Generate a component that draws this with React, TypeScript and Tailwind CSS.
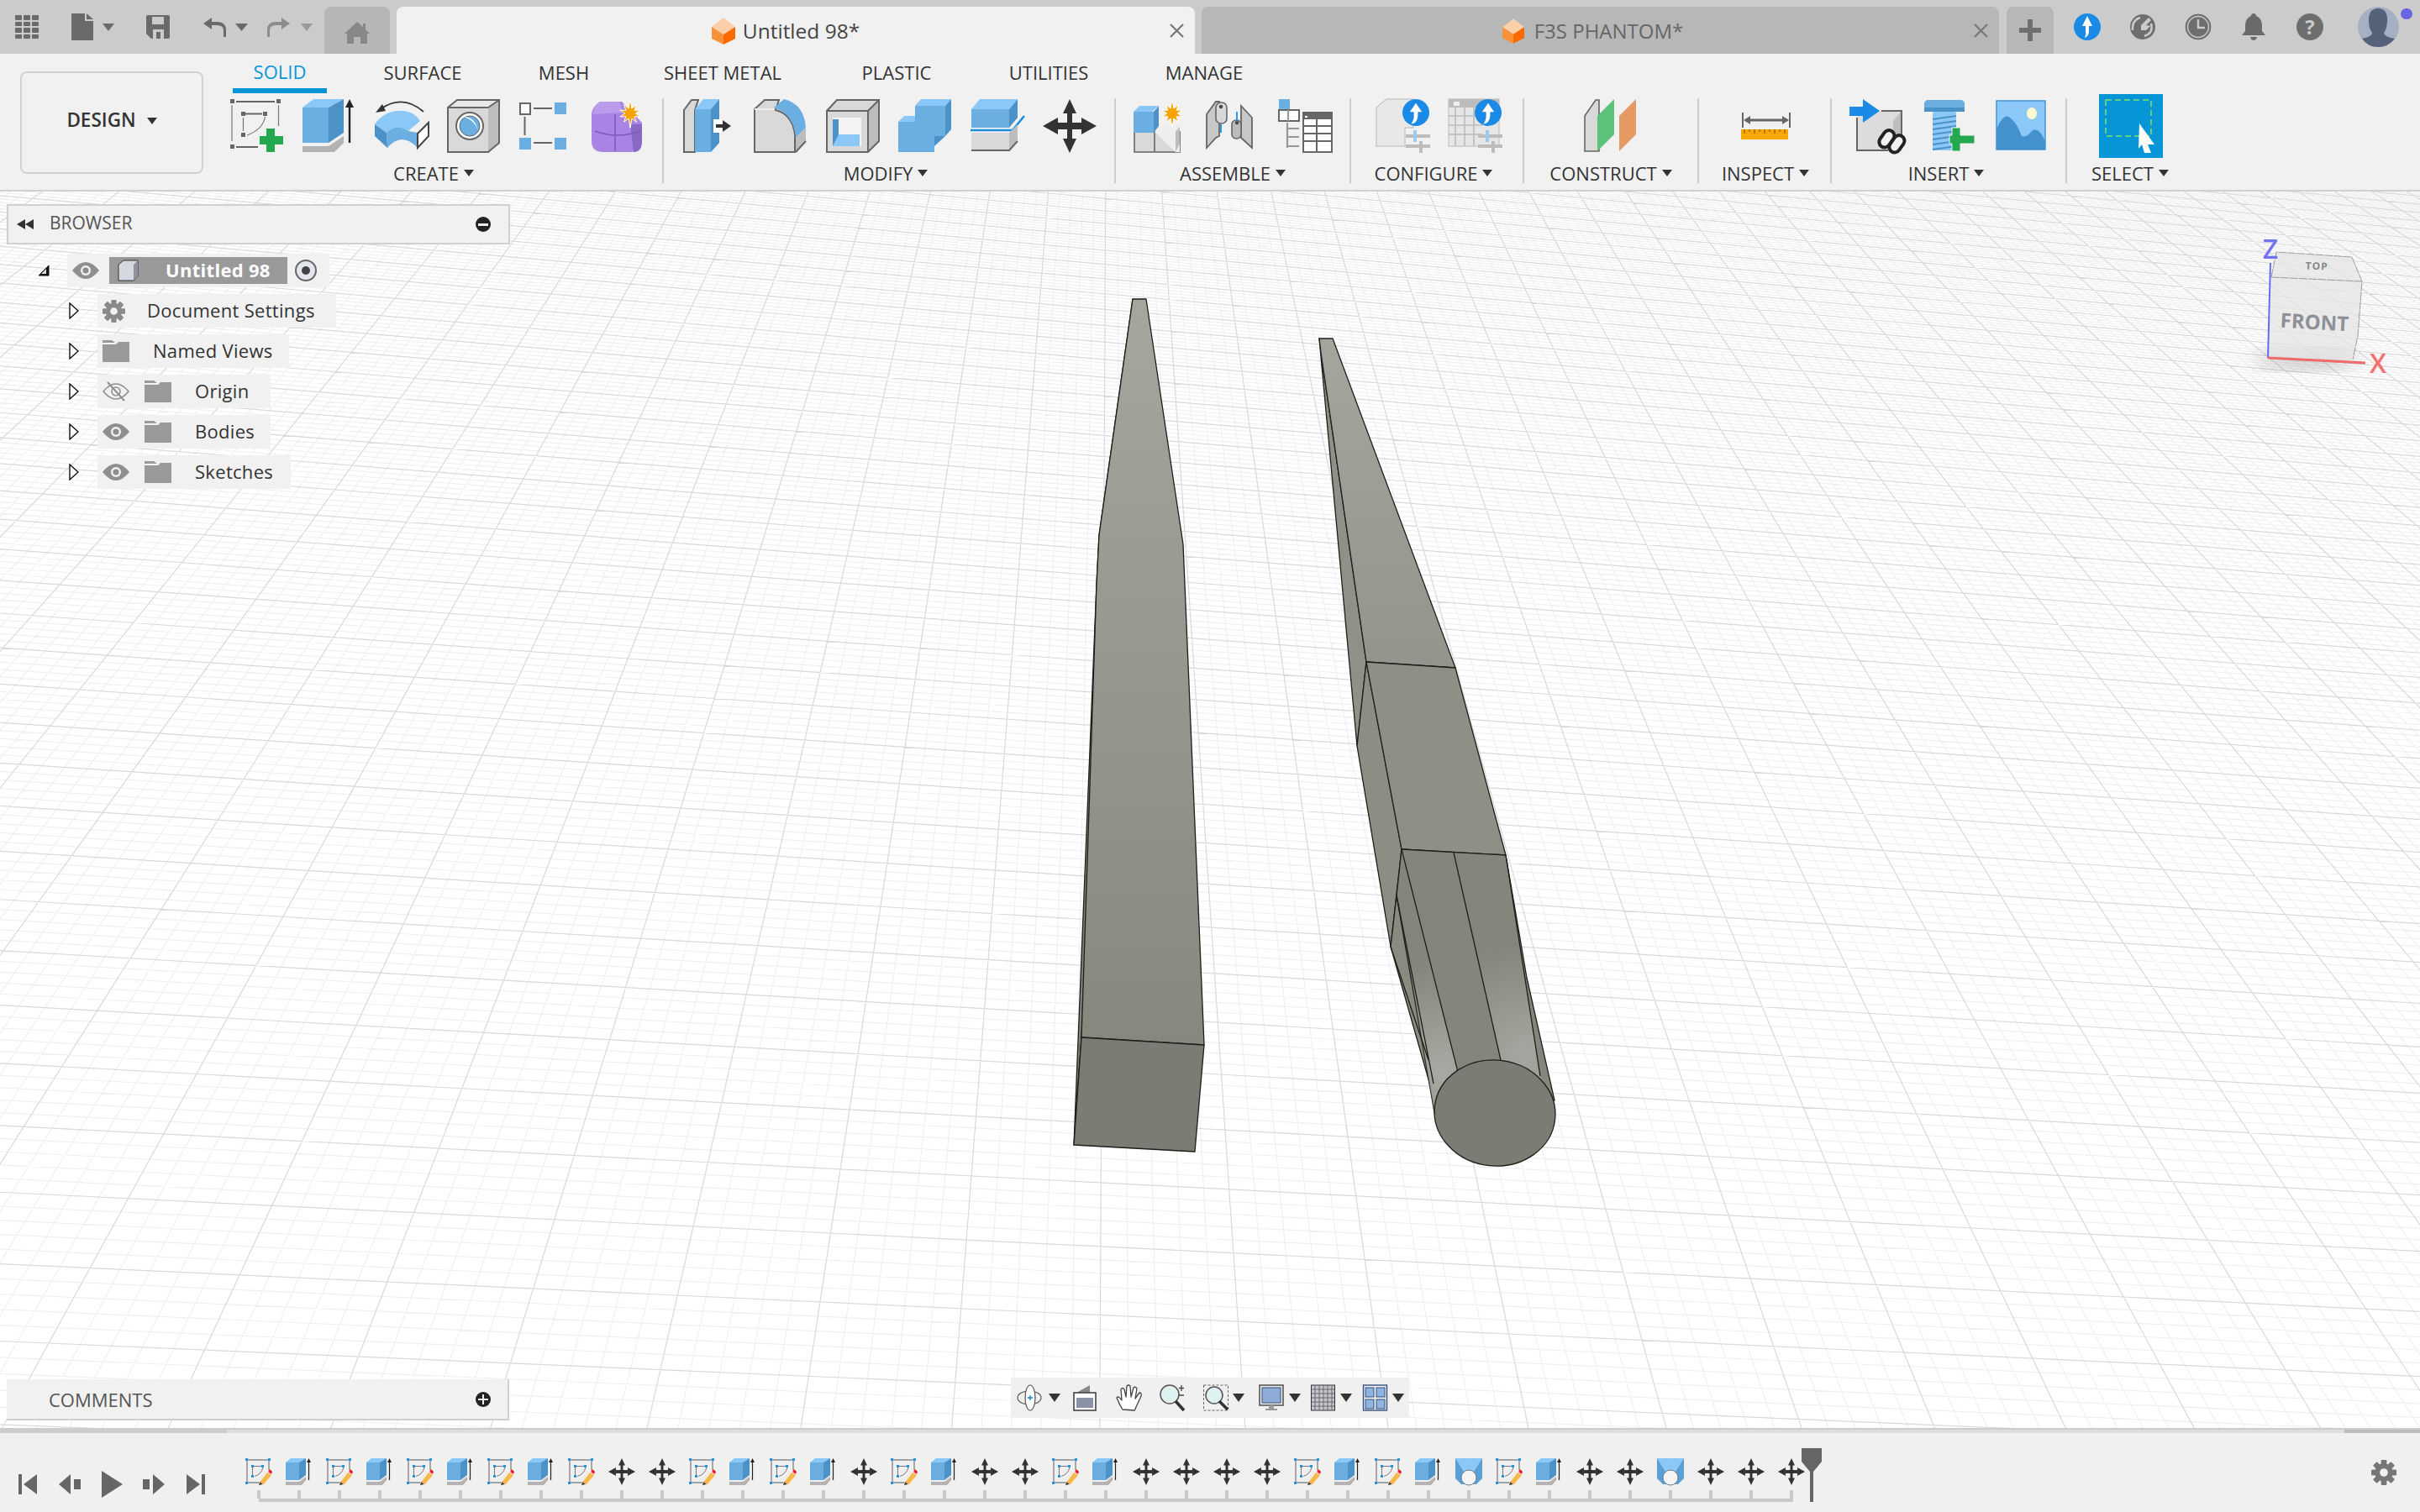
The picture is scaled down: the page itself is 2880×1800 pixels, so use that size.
import type { ReactNode } from "react";

const BLUE = "#6aaee2";
const BLUE_TOP = "#8bc8f8";
const BLUE_SIDE = "#4a92c8";
const GREY = "#d9d9d9";
const GREY_SIDE = "#bdbdbd";
const EDGE = "#666666";

// ground grid, a plain homography from (u, v) grid units to screen pixels
const V1 = [1320, -700];
const V2 = [30000, 2900];
const P0 = [480, 1100];
const A = 0.00483;
const B = 0.0314;

function project(u: number, v: number) {
  const w = 1 + u * A + v * B;
  const x = (P0[0] + u * A * V2[0] + v * B * V1[0]) / w;
  const y = (P0[1] + u * A * V2[1] + v * B * V1[1]) / w;
  return `${x.toFixed(1)} ${y.toFixed(1)}`;
}

function gridPath(major: boolean) {
  let d = "";
  for (let i = -150; i <= 225; i++) {
    if ((i % 5 === 0) !== major) continue;
    d += `M${project(i / 5, -14)}L${project(i / 5, 50)}`;
  }
  for (let i = -70; i <= 250; i++) {
    if ((i % 5 === 0) !== major) continue;
    d += `M${project(-30, i / 5)}L${project(45, i / 5)}`;
  }
  return d;
}

function Icon({ children, className = "w-[64px] h-[64px]", vb = "0 0 64 64" }: { children: ReactNode; className?: string; vb?: string }) {
  return (
    <svg viewBox={vb} className={`${className} shrink-0 block overflow-visible`}>
      {children}
    </svg>
  );
}

function Caret({ className = "w-[12px] h-[8px]", color = "#333333" }: { className?: string; color?: string }) {
  return (
    <svg viewBox="0 0 12 8" preserveAspectRatio="none" className={`${className} shrink-0 block`}>
      <path d="M0 0H12L6 8Z" fill={color} />
    </svg>
  );
}

function Star({ cx, cy, r }: { cx: number; cy: number; r: number }) {
  const pts: string[] = [];
  for (let i = 0; i < 20; i++) {
    const a = (i / 20) * Math.PI * 2;
    const rr = i % 2 === 0 ? (i % 10 === 0 ? r * 1.15 : r * 0.85) : r * 0.42;
    pts.push(`${(cx + Math.sin(a) * rr).toFixed(1)},${(cy - Math.cos(a) * rr).toFixed(1)}`);
  }
  return <polygon points={pts.join(" ")} fill="#f8a400" stroke="#fff" strokeWidth="1" />;
}

function MoveGlyph() {
  return (
    <path
      d="M32 0L40 17H35V28H46V22L64 32L46 42V36H35V47H40L32 64L24 47H29V36H18V42L0 32L18 22V28H29V17H24Z"
      fill="#333333"
    />
  );
}

const CreateSketch = () => (
  <Icon>
    <g fill={EDGE}>
      <rect x="0" y="0" width="5" height="5" />
      <rect x="55" y="0" width="5" height="5" />
      <rect x="0" y="54" width="5" height="5" />
      <rect x="13" y="15" width="5" height="5" />
      <rect x="39" y="15" width="5" height="5" />
      <rect x="13" y="40" width="5" height="5" />
    </g>
    <path d="M7 3H53M7 57H33M18 17.5H38" stroke={EDGE} strokeWidth="2" fill="none" />
    <path d="M2 7V50M57.5 7V32M15.5 22V38M41.5 21Q39 36 20 43" stroke="#777" strokeWidth="1.2" fill="none" />
    <path d="M43 35H53V44H63V54H53V63H43V54H35V44H43Z" fill="#22a84e" />
  </Icon>
);

const Extrude = () => (
  <Icon>
    <path d="M0 10L13 0H49L31 10Z" fill={BLUE_TOP} />
    <path d="M0 10H31V52H0Z" fill={BLUE} />
    <path d="M31 10L49 0V40L31 52Z" fill={BLUE_SIDE} />
    <path d="M0 56H31L49 44V52L38 63H0Z" fill="#b3b3b3" />
    <path d="M56 52V6" stroke="#222" strokeWidth="2.4" />
    <path d="M51 10L56 0L61 10Z" fill="#222" />
  </Icon>
);

const Revolve = () => (
  <Icon>
    <path d="M58 15Q34 -6 8 11" stroke="#333" strokeWidth="1.7" fill="none" />
    <path d="M1 16L13 14L9 6Z" fill="#333" />
    <path d="M0 30C12 10 44 8 54 26L40 38Q26 28 14 40Z" fill={BLUE_TOP} />
    <path d="M14 40Q26 28 40 38L51 40L51 58Q32 38 15 58Z" fill={BLUE} />
    <path d="M0 30L14 40L15 58L0 44Z" fill={BLUE_SIDE} />
    <path d="M51 41L64 28V44L51 58Z" fill="#fff" stroke="#444" strokeWidth="2" />
  </Icon>
);

const Hole = () => (
  <Icon>
    <path d="M1 10L12 1H62L49 10Z" fill="#e8e8e8" />
    <path d="M1 10H49V63H1Z" fill={GREY} />
    <path d="M49 10L62 1V52L49 63Z" fill={GREY_SIDE} />
    <path d="M1 63V10L12 1H62V52L49 63ZM49 10H1M49 10L62 1" fill="none" stroke={EDGE} strokeWidth="2" />
    <circle cx="27" cy="32" r="16" fill="#fff" stroke={EDGE} strokeWidth="2" />
    <circle cx="27" cy="32" r="12" fill={BLUE} stroke={EDGE} strokeWidth="1" />
    <path d="M20 21C30 21 35 28 37 38C34 28 28 24 20 21Z" fill="#fff" />
  </Icon>
);

const Pattern = () => (
  <Icon>
    <rect x="1" y="5" width="12" height="13" fill="#fff" stroke={EDGE} strokeWidth="2" />
    <rect x="42" y="4" width="14" height="14" fill={BLUE} />
    <rect x="0" y="46" width="14" height="14" fill={BLUE} />
    <rect x="42" y="46" width="14" height="14" fill={BLUE} />
    <path d="M17 11H39M17 52H39M6.500 21V43" stroke={EDGE} strokeWidth="2" />
  </Icon>
);

const Form = () => (
  <Icon>
    <path d="M10 3H36L60 28V50Q60 63 46 63H14Q0 63 0 50V18Q0 10 10 3Z" fill="#a884e4" />
    <path d="M10 3H34L36 16L2 18Q2 9 10 3Z" fill="#bb9cec" />
    <path d="M46 30H60V50Q60 63 50 63Z" fill="#8a68c6" />
    <path d="M4 38Q30 48 58 38M28 18V62" stroke="#7c5cb8" strokeWidth="1.5" fill="none" />
    <Star cx={46} cy={17} r={15} />
  </Icon>
);

const PressPull = () => (
  <Icon>
    <path d="M3 13L12 1H20L16 13V63H3Z" fill={GREY} stroke={EDGE} strokeWidth="2" />
    <path d="M16 12L26 0H45L35 12Z" fill={BLUE_TOP} />
    <path d="M16 12H35V63H16Z" fill={BLUE} />
    <path d="M35 12L45 0V52L35 63Z" fill={BLUE_SIDE} />
    <rect x="38" y="24" width="12" height="16" fill="#fff" />
    <path d="M41 30H49V25L59 32L49 39V34H41Z" fill="#333" />
  </Icon>
);

const Fillet = () => (
  <Icon>
    <path d="M1 12L13 1H30L26 13Q46 18 49 42V63H1Z" fill={GREY} stroke={EDGE} strokeWidth="2" />
    <path d="M1 12H24" stroke="#eee" strokeWidth="2" />
    <path d="M24 10L36 0Q60 6 62 34L50 46Q48 18 24 10Z" fill={BLUE} />
    <path d="M50 46L62 34V50L50 63Z" fill={GREY_SIDE} />
    <path d="M50 63L62 50" stroke={EDGE} strokeWidth="2" />
  </Icon>
);

const Shell = () => (
  <Icon>
    <path d="M1 14L13 1H63V50L50 63H1Z" fill={GREY} />
    <path d="M50 14L63 1V50L50 63Z" fill={GREY_SIDE} />
    <path d="M1 63V14L13 1H63V50L50 63ZM1 14H50V63M50 14L63 1" fill="none" stroke={EDGE} strokeWidth="2" />
    <rect x="8" y="22" width="34" height="34" fill="#f4f4f4" />
    <path d="M8 24H15V46L8 56Z" fill={BLUE_SIDE} />
    <path d="M15 42H40V56H8Z" fill={BLUE_TOP} />
  </Icon>
);

const Combine = () => (
  <Icon>
    <path d="M20 8L27 0H63L56 8Z" fill={BLUE_TOP} />
    <path d="M0 27L7 20H20V27Z" fill={BLUE_TOP} />
    <path d="M20 8H56V44H43V63H0V27H20Z" fill={BLUE} />
    <path d="M56 8L63 0V36L56 44ZM43 44L56 44L43 56Z" fill={BLUE_SIDE} />
    <path d="M43 44V63L38 63V44Z" fill={BLUE} />
  </Icon>
);

const OffsetPlane = () => (
  <Icon>
    <path d="M1 12L11 0H56L46 12Z" fill={BLUE_TOP} />
    <path d="M1 12H46V34H1Z" fill={BLUE} />
    <path d="M46 12L56 0V22L46 34Z" fill={BLUE_SIDE} />
    <path d="M0 37H50L64 20" stroke="#1a8fe0" strokeWidth="2.6" fill="none" />
    <path d="M1 40H46V60H1Z" fill={GREY} />
    <path d="M46 40L56 30V50L46 60Z" fill={GREY_SIDE} />
    <path d="M1 61H46L56 50" stroke={EDGE} strokeWidth="2" fill="none" />
  </Icon>
);

const NewComponent = () => (
  <Icon>
    <path d="M1 39H25V63H1ZM25 39H55V63H25Z" fill={GREY} stroke={EDGE} strokeWidth="1.6" />
    <path d="M25 39L36 32H55V52L55 63H50" fill="#eee" />
    <path d="M50 39L55 33V53L50 63Z" fill={GREY_SIDE} />
    <path d="M0 15L7 8H30L22 15Z" fill={BLUE_TOP} />
    <path d="M0 15H24V40H0Z" fill={BLUE} />
    <path d="M24 15L30 8V32L24 40Z" fill={BLUE_SIDE} />
    <Star cx={46} cy={17} r={15} />
  </Icon>
);

const Joint = () => (
  <Icon>
    <path d="M1 18L12 3H16V44L12 46L1 58Z" fill="#c8c8c8" stroke={EDGE} strokeWidth="1.8" />
    <path d="M42 8L55 22V58L42 46Z" fill="#c8c8c8" stroke={EDGE} strokeWidth="1.8" />
    <rect x="12" y="4" width="13" height="25" rx="6" fill="#d8d8d8" stroke={EDGE} strokeWidth="1.6" />
    <rect x="31" y="25" width="11" height="22" rx="5" fill="#bbb" stroke={EDGE} strokeWidth="1.6" />
    <circle cx="18" cy="9" r="2.200" fill="#444" />
    <circle cx="37" cy="28" r="2.200" fill="#444" />
    <path d="M37 15V27M18 30V40" stroke="#1a8fe0" strokeWidth="1.8" />
  </Icon>
);

const Bom = () => (
  <Icon>
    <rect x="1" y="0" width="13" height="12" fill={BLUE} />
    <rect x="1" y="13" width="24" height="13" fill="#fff" stroke={EDGE} strokeWidth="2" />
    <path d="M12 13V26M11 28V58M11 35H25M11 45H25M11 56H25" stroke="#999" strokeWidth="2.2" fill="none" />
    <rect x="30" y="16" width="34" height="47" fill="#fff" stroke={EDGE} strokeWidth="2" />
    <rect x="30" y="16" width="34" height="8" fill="#666" />
    <rect x="32" y="20" width="3" height="2" fill="#fff" />
    <path d="M30 32H64M30 41H64M30 50H64M46 24V63" stroke={EDGE} strokeWidth="2" />
  </Icon>
);

const UpBadge = ({ cx, cy, r = 16 }: { cx: number; cy: number; r?: number }) => (
  <g>
    <circle cx={cx} cy={cy} r={r} fill="#1a8ae6" />
    <path
      d={`M${cx} ${cy - r * 0.7}L${cx + r * 0.45} ${cy - r * 0.05}H${cx + r * 0.15}V${cy + r * 0.25}Q${cx + r * 0.1} ${cy + r * 0.8} ${cx - r * 0.35} ${cy + r * 0.85}Q${cx - r * 0.12} ${cy + r * 0.5} ${cx - r * 0.15} ${cy + r * 0.2}V${cy - r * 0.05}H${cx - r * 0.45}Z`}
      fill="#fff"
    />
  </g>
);

const Sliders = ({ x }: { x: number }) => (
  <g>
    <rect x={x} y="42" width="29" height="4" fill="#bcbcbc" />
    <rect x={x + 9} y="37" width="4" height="14" fill="#9ccbef" />
    <rect x={x} y="54" width="29" height="4" fill="#bcbcbc" />
    <rect x={x + 16} y="50" width="4" height="14" fill="#bcbcbc" />
  </g>
);

const ConfigureA = () => (
  <Icon>
    <path d="M0 10L12 0H44V34H34V56H0Z" fill="#e8e8e8" stroke="#c8c8c8" strokeWidth="1.4" />
    <Sliders x={35} />
    <UpBadge cx={47} cy={16} />
  </Icon>
);

const ConfigureB = () => (
  <Icon>
    <rect x="0" y="0" width="60" height="56" fill="#e6e6e6" stroke="#c8c8c8" strokeWidth="1.4" />
    <rect x="0" y="0" width="60" height="10" fill="#bcbcbc" />
    <rect x="6" y="3" width="7" height="5" fill="#eee" />
    <path d="M0 20H40M0 31H40M0 42H40M8 10V56M19 10V56M30 10V56" stroke="#bbb" strokeWidth="1.6" />
    <Sliders x={35} />
    <UpBadge cx={47} cy={16} />
  </Icon>
);

const Construct = () => (
  <Icon>
    <path d="M1 20L14 1H18V62H1Z" fill={GREY} stroke={EDGE} strokeWidth="1.6" />
    <path d="M16 20L36 0V42L16 62Z" fill="#5cc27a" />
    <path d="M42 20L62 0V42L42 62Z" fill="#e59a63" />
  </Icon>
);

const Measure = () => (
  <Icon>
    <path d="M6 16V34M62 16V34" stroke={EDGE} strokeWidth="2" />
    <path d="M9 25H59" stroke={EDGE} strokeWidth="3" />
    <path d="M7 25L15 20V30ZM61 25L53 20V30Z" fill={EDGE} />
    <rect x="4" y="36" width="56" height="12" fill="#f6a800" />
    <path d="M8 36V41M14 36V39M20 36V41M26 36V39M32 36V41M38 36V39M44 36V41M50 36V39M56 36V41" stroke="#775000" strokeWidth="1" />
  </Icon>
);

const Derive = () => (
  <Icon>
    <path d="M9 14H62V50L52 61H9Z" fill="#dcdcdc" />
    <path d="M52 26L62 14V50L52 61Z" fill={GREY_SIDE} />
    <path d="M9 22V61H46M38 14H62V50" stroke={EDGE} strokeWidth="2" fill="none" />
    <path d="M0 9H16V0L36 14L16 28V20H0Z" fill="#1a8ae6" />
    <g fill="#f1f1f1" stroke="#222" strokeWidth="4">
      <rect x="38" y="36" width="13" height="22" rx="6.500" transform="rotate(35 44 47)" />
      <rect x="50" y="42" width="13" height="22" rx="6.500" transform="rotate(35 56 53)" />
    </g>
  </Icon>
);

const Bolt = () => (
  <Icon>
    <g transform="translate(3 0)">
      <path d="M0 4L3 1H45L48 4V15H0Z" fill={BLUE} />
      <path d="M0 10H48V15H0Z" fill={BLUE_SIDE} />
      <rect x="10" y="15" width="28" height="46" rx="2" fill={BLUE_TOP} />
      <path d="M10 24L38 20M10 30L38 26M10 36L38 32M10 42L38 38M10 48L38 44M10 54L38 50M10 60L38 56" stroke={BLUE_SIDE} strokeWidth="2" />
      <path d="M33 34H43V43H60V53H43V62H33V53H30V43H33Z" fill="#22a84e" stroke="#f1f1f1" strokeWidth="1" />
    </g>
  </Icon>
);

const Picture = () => (
  <Icon>
    <g transform="translate(3 0)">
      <rect x="0" y="2" width="58" height="58" fill={BLUE_TOP} stroke="#4a9ad8" strokeWidth="1.6" />
      <ellipse cx="42" cy="17" rx="6" ry="7" fill="#fffbd0" />
      <path d="M0 60V36Q8 16 16 22Q24 28 30 44Q36 46 42 38Q50 32 58 50V60Z" fill="#4392ce" />
    </g>
  </Icon>
);

const SelectIcon = () => (
  <div className="w-[76px] h-[76px] -my-[6px] bg-[#0696d7]">
    <Icon className="w-[76px] h-[76px]" vb="0 0 76 76">
      <rect x="8" y="7" width="54" height="43" fill="none" stroke="#5fd17f" strokeWidth="2" strokeDasharray="7 4" />
      <path d="M48 35L66 60L58 60L62 70L54 70L51 60L47 65Z" fill="#fff" />
    </Icon>
  </div>
);

const Move = () => (
  <Icon>
    <MoveGlyph />
  </Icon>
);

const SketchEdit = () => (
  <Icon className="w-[32px] h-[32px]" vb="0 0 32 32">
    <path d="M2 2H28M2 2V28M28 2V14M2 29H16" stroke="#888" strokeWidth="1.4" fill="none" />
    <g fill="#2196e0">
      <rect x="0" y="0" width="3" height="3" />
      <rect x="27" y="0" width="3" height="3" />
      <rect x="0" y="28" width="3" height="3" />
      <rect x="7" y="8" width="3" height="3" />
      <rect x="19" y="8" width="3" height="3" />
      <rect x="7" y="20" width="3" height="3" />
    </g>
    <path d="M10 9.500H19M8.500 11V20M21 11Q19 19 11 21.500" stroke="#777" strokeWidth="1" fill="none" />
    <path d="M17 29L26 17L31 20L22 31Z" fill="#f8b84a" />
    <path d="M27 16L29 13L32 16L31 19Z" fill="#e8202a" />
    <path d="M16 32L17 28L21 31Z" fill="#444" />
  </Icon>
);

const MiniExtrude = () => (
  <Icon className="w-[32px] h-[32px]" vb="0 0 32 32">
    <path d="M0 5L6 0H24L16 5Z" fill={BLUE_TOP} />
    <path d="M0 5H16V26H0Z" fill={BLUE} />
    <path d="M16 5L24 0V20L16 26Z" fill={BLUE_SIDE} />
    <path d="M0 28H16L24 22V26L19 32H0Z" fill="#b3b3b3" />
    <path d="M27.500 26V3" stroke="#222" strokeWidth="1.2" />
    <path d="M25 5L27.500 0L30 5Z" fill="#222" />
  </Icon>
);

const MiniMove = () => (
  <Icon className="w-[32px] h-[32px]" vb="0 0 64 64">
    <MoveGlyph />
  </Icon>
);

const MiniLoft = () => (
  <Icon className="w-[32px] h-[32px]" vb="0 0 32 32">
    <path d="M0 0H32V24L25 31H7L0 24Z" fill="#5a9fd6" />
    <path d="M0 0H32L22 16H10Z" fill={BLUE_TOP} />
    <ellipse cx="16" cy="23" rx="9" ry="9" fill="#f4f4f4" stroke="#777" strokeWidth="1" />
  </Icon>
);

const groups: { label: string; className: string; labelClass?: string; iconClass?: string; icons: ReactNode[] }[] = [
  { label: "CREATE", className: "w-[536px]", labelClass: "pr-[10px]", icons: [<CreateSketch />, <Extrude />, <Revolve />, <Hole />, <Pattern />, <Form />] },
  { label: "MODIFY", className: "w-[538px]", labelClass: "pr-[8px]", icons: [<PressPull />, <Fillet />, <Shell />, <Combine />, <OffsetPlane />, <Move />] },
  { label: "ASSEMBLE", className: "w-[280px]", icons: [<NewComponent />, <Joint />, <Bom />] },
  { label: "CONFIGURE", className: "w-[206px]", labelClass: "pr-[8px]", iconClass: "pl-[6px]", icons: [<ConfigureA />, <ConfigureB />] },
  { label: "CONSTRUCT", className: "w-[208px]", icons: [<Construct />] },
  { label: "INSPECT", className: "w-[158px]", labelClass: "pl-[2px]", icons: [<Measure />] },
  { label: "INSERT", className: "w-[280px]", labelClass: "pr-[6px]", icons: [<Derive />, <Bolt />, <Picture />] },
  { label: "SELECT", className: "w-[152px]", labelClass: "pr-[2px]", icons: [<SelectIcon />] },
];

const tabs = [
  { label: "SURFACE", className: "w-[228px]" },
  { label: "MESH", className: "w-[108px]" },
  { label: "SHEET METAL", className: "w-[270px]" },
  { label: "PLASTIC", className: "w-[144px]" },
  { label: "UTILITIES", className: "w-[218px]" },
  { label: "MANAGE", className: "w-[152px]" },
];

const history = "s e s e s e s e s m m s e s e m s e m m s e m m m m s e s e l s e m m l m m m".split(" ");

const OrangeCube = ({ className }: { className: string }) => (
  <Icon className={className} vb="0 0 28 32">
    <path d="M14 0L28 11L14 20L0 11Z" fill="#fbcfa8" />
    <path d="M0 11L14 20V32L0 25Z" fill="#f8923a" />
    <path d="M28 11L14 20V32L28 25Z" fill="#fb6a00" />
  </Icon>
);

const CloseX = () => (
  <svg viewBox="0 0 17 17" className="absolute right-[13px] top-[20px] w-[17px] h-[17px]">
    <path d="M1 1L16 16M16 1L1 16" stroke="#777" strokeWidth="2.2" />
  </svg>
);

const Eye = () => (
  <Icon className="w-[32px] h-[20px]" vb="0 0 32 20">
    <path d="M0 10Q16 -10 32 10Q16 30 0 10Z" fill="#8f8f8f" />
    <circle cx="16" cy="10" r="6" fill="#f1f1f1" />
    <circle cx="16" cy="10" r="3.600" fill="#8f8f8f" />
  </Icon>
);

const EyeOff = () => (
  <Icon className="w-[32px] h-[24px]" vb="0 0 32 24">
    <path d="M1 12Q16 -6 31 12Q16 30 1 12Z" fill="none" stroke="#8f8f8f" strokeWidth="1.6" />
    <circle cx="16" cy="12" r="5" fill="none" stroke="#8f8f8f" strokeWidth="1.6" />
    <path d="M6 1L26 23" stroke="#8f8f8f" strokeWidth="2" />
  </Icon>
);

const Folder = () => (
  <Icon className="w-[32px] h-[26px]" vb="0 0 32 26">
    <path d="M0 0H11L15 3H0Z" fill="#9a9a9a" />
    <path d="M0 5H16L19 2H32V26H0Z" fill="#9a9a9a" />
  </Icon>
);

const Gear = ({ className, color }: { className: string; color: string }) => {
  const teeth = [0, 45, 90, 135, 180, 225, 270, 315];
  return (
    <Icon className={className} vb="0 0 28 28">
      {teeth.map((t) => (
        <rect key={t} x="11" y="0" width="6" height="28" rx="1" fill={color} transform={`rotate(${t} 14 14)`} />
      ))}
      <circle cx="14" cy="14" r="10" fill={color} />
      <circle cx="14" cy="14" r="4.500" fill="#f1f1f1" />
    </Icon>
  );
};

const Arrow = () => (
  <svg viewBox="0 0 12 20" className="w-[12px] h-[20px] shrink-0">
    <path d="M1 1L11 10L1 19Z" fill="#fff" stroke="#111" strokeWidth="1.4" />
  </svg>
);

const treeRows = [
  { name: "Document Settings", rowClass: "w-[284px]", textClass: "ml-[26px]", eye: null, icon: <Gear className="w-[27px] h-[27px]" color="#8a8a8a" /> },
  { name: "Named Views", rowClass: "w-[228px]", textClass: "ml-[28px]", eye: null, icon: <Folder /> },
  { name: "Origin", rowClass: "w-[206px]", textClass: "ml-[28px]", eye: <EyeOff />, icon: <Folder /> },
  { name: "Bodies", rowClass: "w-[206px]", textClass: "ml-[28px]", eye: <Eye />, icon: <Folder /> },
  { name: "Sketches", rowClass: "w-[230px]", textClass: "ml-[28px]", eye: <Eye />, icon: <Folder /> },
];

function Viewport() {
  return (
    <svg viewBox="0 228 2880 1472" className="absolute inset-0 w-full h-full">
      <defs>
        <linearGradient id="bodyA" gradientUnits="userSpaceOnUse" x1="0" y1="356" x2="0" y2="1240">
          <stop offset="0" stopColor="#a4a79e" />
          <stop offset="1" stopColor="#87877d" />
        </linearGradient>
        <linearGradient id="bodyB" gradientUnits="userSpaceOnUse" x1="0" y1="403" x2="0" y2="1320">
          <stop offset="0" stopColor="#a3a69d" />
          <stop offset="1" stopColor="#7e7e75" />
        </linearGradient>
        <radialGradient id="shineA" gradientUnits="userSpaceOnUse" cx="1716" cy="1275" r="130">
          <stop offset="0" stopColor="#fff" stopOpacity="0.3" />
          <stop offset="1" stopColor="#fff" stopOpacity="0" />
        </radialGradient>
        <radialGradient id="shineB" gradientUnits="userSpaceOnUse" cx="1815" cy="1255" r="130">
          <stop offset="0" stopColor="#fff" stopOpacity="0.28" />
          <stop offset="1" stopColor="#fff" stopOpacity="0" />
        </radialGradient>
        <filter id="soft" x="-30%" y="-30%" width="160%" height="160%">
          <feGaussianBlur stdDeviation="12" />
        </filter>
      </defs>

      <rect x="0" y="228" width="2880" height="1472" fill="#ffffff" />
      <path d={gridPath(false)} stroke="#f0f0f0" strokeWidth="1.2" fill="none" />
      <path d={gridPath(true)} stroke="#d9d9d9" strokeWidth="1.2" fill="none" />

      {/* left body */}
      <g stroke="#1e1e1a" strokeWidth="1.3" strokeLinejoin="round">
        <path d="M1348 356L1308 637L1305 695L1278 1363L1287 1235Z" fill="#83837a" />
        <path d="M1348 356H1364L1408 648L1433 1244L1287 1235L1305 695L1308 637Z" fill="url(#bodyA)" />
        <path d="M1287 1235L1433 1244L1422 1371L1278 1363Z" fill="#7b7c74" />
      </g>

      {/* right body */}
      <g stroke="#1e1e1a" strokeWidth="1.3" strokeLinejoin="round">
        <path d="M1570 403L1572 420L1626 788L1615 888Z" fill="#8f9087" />
        <path d="M1570 403H1586L1732 795L1626 788L1572 420Z" fill="url(#bodyB)" />
        <path d="M1626 788L1668 1011L1655 1127L1615 888Z" fill="#8d8d84" />
        <path d="M1626 788L1732 795L1792 1018L1668 1011Z" fill="#8e8f85" />
        <path d="M1655 1127L1662 1066L1710 1320Z" fill="#8a8a81" />
        <path d="M1668 1011L1792 1018L1817 1164L1850 1310L1708 1330L1662 1066Z" fill="#85857c" />
        <path d="M1668 1011L1662 1066L1708 1330L1735 1276Z" fill="url(#shineA)" stroke="none" />
        <path d="M1730 1015L1792 1018L1833 1281L1850 1310L1786 1262Z" fill="url(#shineB)" stroke="none" />
        <path d="M1662 1066L1706 1290M1655 1127L1700 1262" fill="none" />
        <path d="M1668 1011L1735 1276M1730 1015L1786 1262M1792 1018L1833 1281" fill="none" />
        <ellipse cx="1779" cy="1325" rx="72" ry="63" fill="#7b7c74" transform="rotate(6 1779 1325)" />
      </g>

      {/* view cube */}
      <ellipse cx="2745" cy="428" rx="62" ry="10" fill="#000" opacity="0.22" filter="url(#soft)" />
      <path d="M2703 330L2709 300L2799 306L2811 335L2806 400L2800 428L2699 426Z" fill="#e4e4e4" fillOpacity="0.72" />
      <path d="M2703 330L2709 300L2799 306L2811 335L2806 400L2800 428M2703 330L2811 335" fill="none" stroke="#9a9a9a" strokeWidth="1" strokeDasharray="10 1" />
      <text x="2757" y="321" textAnchor="middle" className="font-['Open_Sans',sans-serif] font-bold text-[12px]" fill="#85888d" transform="rotate(2 2757 321)" letterSpacing="1">TOP</text>
      <text x="2754" y="392" textAnchor="middle" className="font-['Open_Sans',sans-serif] font-bold text-[24px]" fill="#8d9096" transform="rotate(3 2754 392)">FRONT</text>
      <path d="M2702 313L2699 426" stroke="#6a6af0" strokeWidth="2" />
      <path d="M2699 426L2815 432" stroke="#f06a6a" strokeWidth="3" />
      <text x="2702" y="308" textAnchor="middle" className="font-['Open_Sans',sans-serif] font-semibold text-[32px]" fill="#7272f4">Z</text>
      <text x="2830" y="444" textAnchor="middle" className="font-['Open_Sans',sans-serif] font-semibold text-[32px]" fill="#f87070">X</text>
    </svg>
  );
}

function NavBar() {
  return (
    <div className="absolute left-1/2 -translate-x-1/2 bottom-[12px] w-[474px] h-[48px] bg-[#f0f0f0] flex items-center">
      <Icon className="w-[31px] h-[32px] ml-[7px]" vb="0 0 31 32">
        <ellipse cx="15" cy="16" rx="14" ry="8" fill="none" stroke="#555" strokeWidth="1.2" />
        <ellipse cx="16" cy="16" rx="6" ry="15" fill="#fff" stroke="#555" strokeWidth="1.2" />
        <path d="M13 16H19M16 13V19" stroke="#1a7fd8" strokeWidth="1.4" />
      </Icon>
      <Caret className="w-[14px] h-[10px] ml-[7px]" />
      <Icon className="w-[28px] h-[32px] ml-[15px]" vb="0 0 28 32">
        <path d="M4 10L20 1V10Z" fill="#888" />
        <rect x="1" y="10" width="26" height="21" fill="#fff" stroke="#444" strokeWidth="1.6" />
        <rect x="4" y="16" width="20" height="12" fill="#8a92a8" />
      </Icon>
      <Icon className="w-[31px] h-[32px] ml-[23px]" vb="0 0 31 32">
        <path d="M8 30Q4 24 1 16Q3 13 7 19L6 6Q8 3 10 6L12 15L13 2Q15 0 17 2L18 15L21 4Q23 2 25 5L23 17L28 10Q31 10 30 14L24 27Q23 30 22 31Z" fill="#fff" stroke="#444" strokeWidth="1.3" strokeLinejoin="round" />
      </Icon>
      <Icon className="w-[31px] h-[32px] ml-[21px]" vb="0 0 31 32">
        <circle cx="12" cy="12" r="11" fill="#dff2f2" stroke="#555" strokeWidth="1.5" />
        <path d="M19 20L29 31" stroke="#333" strokeWidth="3.6" />
        <path d="M26 1V8M23 4.500H29M23 13H29" stroke="#444" strokeWidth="1.3" />
      </Icon>
      <Icon className="w-[30px] h-[32px] ml-[21px]" vb="0 0 30 32">
        <rect x="0.500" y="1" width="29" height="30" fill="none" stroke="#666" strokeWidth="1" strokeDasharray="3 2" />
        <circle cx="13" cy="13" r="10" fill="#dff2f2" stroke="#555" strokeWidth="1.5" />
        <path d="M19 20L29 30" stroke="#333" strokeWidth="3.6" />
      </Icon>
      <Caret className="w-[14px] h-[10px] ml-[5px]" />
      <Icon className="w-[30px] h-[32px] ml-[17px]" vb="0 0 30 32">
        <rect x="1" y="1" width="28" height="24" fill="#e8e8e8" stroke="#444" strokeWidth="1.4" />
        <rect x="4" y="4" width="22" height="18" fill="#8fabd8" stroke="#34507c" strokeWidth="1" />
        <path d="M12 25H18V29H22V31H8V29H12Z" fill="#999" />
      </Icon>
      <Caret className="w-[14px] h-[10px] ml-[6px]" />
      <Icon className="w-[29px] h-[32px] ml-[12px]" vb="0 0 29 32">
        <rect x="0.500" y="1" width="28" height="30" fill="#c4c6cc" stroke="#333" strokeWidth="1" />
        <path d="M5 1V31M10 1V31M15 1V31M20 1V31M25 1V31M1 6H28M1 11H28M1 16H28M1 21H28M1 26H28" stroke="#66686e" strokeWidth="1" />
      </Icon>
      <Caret className="w-[14px] h-[10px] ml-[6px]" />
      <Icon className="w-[29px] h-[32px] ml-[13px]" vb="0 0 29 32">
        <rect x="0.500" y="1" width="28" height="30" fill="#f0f0f0" stroke="#34507c" strokeWidth="1.4" />
        <rect x="3" y="4" width="10" height="11" fill="#8fb4e0" stroke="#34507c" />
        <rect x="16" y="4" width="10" height="11" fill="#8fb4e0" stroke="#34507c" />
        <rect x="3" y="18" width="10" height="11" fill="#8fb4e0" stroke="#34507c" />
        <rect x="16" y="18" width="10" height="11" fill="#8fb4e0" stroke="#34507c" />
      </Icon>
      <Caret className="w-[14px] h-[10px] ml-[6px]" />
    </div>
  );
}

export default function App() {
  return (
    <div className="w-[2880px] h-[1800px] flex flex-col overflow-hidden bg-white font-['Open_Sans','Liberation_Sans',sans-serif] text-[22px] leading-none text-[#333]">
      {/* title bar */}
      <div className="h-[64px] shrink-0 bg-[#cbcbcb] flex items-center">
        <div className="w-[28px] h-[28px] ml-[18px] grid grid-cols-3 grid-rows-4 gap-[2px]">
          {Array.from({ length: 12 }).map((_, i) => (
            <div key={i} className="bg-[#6a6a6a] rounded-[1px]" />
          ))}
        </div>
        <Icon className="w-[26px] h-[32px] ml-[39px]" vb="0 0 26 32">
          <path d="M0 1Q0 0 1 0H16V9H26V31Q26 32 25 32H1Q0 32 0 31ZM18 0L26 7H18Z" fill="#6a6a6a" />
        </Icon>
        <Caret className="w-[14px] h-[9px] ml-[11px]" color="#6a6a6a" />
        <Icon className="w-[28px] h-[28px] ml-[38px]" vb="0 0 28 28">
          <path d="M2 0H26Q28 0 28 2V26Q28 28 26 28H6L0 22V2Q0 0 2 0ZM7 2V11H21V2ZM8 17V28H21V17ZM12 20H17V28H12Z" fill="#6a6a6a" fillRule="evenodd" />
        </Icon>
        <Icon className="w-[26px] h-[23px] ml-[40px]" vb="0 0 26 23">
          <path d="M24 23V15Q24 9 16 9H10V14L0 7L10 0V5H17Q27 5 27 15V23Z" fill="#6a6a6a" />
        </Icon>
        <Caret className="w-[15px] h-[9px] ml-[12px]" color="#6a6a6a" />
        <Icon className="w-[27px] h-[23px] ml-[23px]" vb="0 0 27 23">
          <path d="M3 23V15Q3 9 11 9H17V14L27 7L17 0V5H10Q0 5 0 15V23Z" fill="#8c8c8c" />
        </Icon>
        <Caret className="w-[14px] h-[9px] ml-[13px]" color="#9a9a9a" />

        <div className="w-[78px] h-[56px] ml-[14px] self-end rounded-t-lg bg-[#b6b6b6] flex items-center justify-center pt-[6px]">
          <Icon className="w-[30px] h-[26px]" vb="0 0 30 26">
            <path d="M15 0L22 6V2H25V9L30 14H27V26H19V18H11V26H3V14H0Z" fill="#888" />
          </Icon>
        </div>

        <div className="relative w-[950px] h-[56px] ml-[8px] self-end rounded-t-lg bg-[#f1f1f1] flex items-center justify-center pr-[24px] pt-[2px]">
          <OrangeCube className="w-[28px] h-[32px]" />
          <span className="ml-[9px] text-[24.500px] text-[#444]">Untitled 98*</span>
          <CloseX />
        </div>

        <div className="relative w-[949px] h-[56px] ml-[8px] self-end rounded-t-lg bg-[#b7b7b7] flex items-center justify-center pr-[18px] pt-[2px]">
          <OrangeCube className="w-[26px] h-[32px]" />
          <span className="ml-[12px] text-[24px] text-[#666]">F3S PHANTOM*</span>
          <CloseX />
        </div>

        <div className="w-[56px] h-[56px] ml-[9px] self-end rounded-t-lg bg-[#b7b7b7] flex items-center justify-center">
          <svg viewBox="0 0 26 26" className="w-[26px] h-[26px]">
            <path d="M10 0H16V10H26V16H16V26H10V16H0V10H10Z" fill="#6f6f6f" />
          </svg>
        </div>

        <Icon className="w-[32px] h-[34px] ml-[24px]" vb="0 0 32 34">
          <circle cx="16" cy="17" r="16" fill="#1a8ae6" stroke="#fff" strokeWidth="0" />
          <path d="M16 4L22 16H18V22Q18 28 13 30Q15 26 14 22V16H10Z" fill="#fff" />
        </Icon>
        <Icon className="w-[32px] h-[32px] ml-[34px]" vb="0 0 32 32">
          <circle cx="16" cy="16" r="15" fill="#6e6e6e" />
          <path d="M4 20Q3 8 13 5M26 12Q29 24 18 27" stroke="#cbcbcb" strokeWidth="2.500" fill="none" />
          <path d="M14 14L23 5L26 8L20 14L25 15L20 20L14 20Z" fill="#cbcbcb" />
        </Icon>
        <Icon className="w-[32px] h-[32px] ml-[34px]" vb="0 0 32 32">
          <circle cx="16" cy="16" r="15" fill="#6e6e6e" stroke="#6e6e6e" strokeWidth="1" />
          <circle cx="16" cy="16" r="12.500" fill="#6e6e6e" stroke="#cbcbcb" strokeWidth="1.400" />
          <path d="M16 7V17H24" stroke="#cbcbcb" strokeWidth="2.400" fill="none" />
        </Icon>
        <Icon className="w-[28px] h-[32px] ml-[36px]" vb="0 0 28 32">
          <path d="M14 0Q17 0 17 3Q24 6 24 14V21L28 26H0L4 21V14Q4 6 11 3Q11 0 14 0ZM10 28H18Q17 32 14 32Q11 32 10 28Z" fill="#6a6a6a" />
        </Icon>
        <div className="w-[32px] h-[32px] ml-[37px] rounded-full bg-[#6e6e6e] flex items-center justify-center text-[24px] font-bold text-[#cbcbcb]">?</div>
        <div className="relative w-[49px] h-[48px] ml-[41px] rounded-full overflow-visible">
          <svg viewBox="0 0 49 48" className="w-[49px] h-[48px]">
            <ellipse cx="24.500" cy="24" rx="24.500" ry="24" fill="#a5b0c4" />
            <path d="M24 2Q36 2 35 18Q34 28 31 31Q31 36 44 38Q36 48 24 48Q12 48 5 38Q17 36 17 31Q13 26 13 16Q13 2 24 2Z" fill="#55627a" />
          </svg>
          <div className="absolute left-[51px] top-[2px] w-[14px] h-[13px] rounded-full bg-[#6866e6]" />
        </div>
      </div>

      {/* ribbon */}
      <div className="h-[164px] shrink-0 bg-[#f1f1f1] border-b-2 border-[#d0d0d0] flex">
        <div className="w-[218px] h-[122px] ml-[24px] mt-[21px] pb-[5px] rounded-lg border-2 border-[#d2d2d2] flex items-center justify-center">
          <span className="font-semibold text-[22.500px]">DESIGN</span>
          <Caret className="ml-[13px] w-[12px] h-[8px]" />
        </div>
        <div className="ml-[12px] flex flex-col">
          <div className="h-[47px] flex pl-[23px]">
            <div className="w-[112px] border-b-[6px] border-[#0696d7] text-[#0696d7] flex items-center justify-center pt-[1px]">SOLID</div>
            {tabs.map((tab) => (
              <div key={tab.label} className={`${tab.className} flex items-center justify-center pb-[3px]`}>
                {tab.label}
              </div>
            ))}
          </div>
          <div className="mt-[6px] h-[101px] flex">
            {groups.map((group, i) => (
              <div
                key={group.label}
                className={`${group.className} pt-[1px] flex flex-col items-center ${i < groups.length - 1 ? "border-r-2 border-[#cdcdcd]" : ""}`}
              >
                <div className={`h-[64px] flex gap-[22px] ${group.iconClass ?? ""}`}>
                  {group.icons.map((icon, j) => (
                    <div key={j}>{icon}</div>
                  ))}
                </div>
                <div className={`mt-[13px] h-[22px] flex items-center ${group.labelClass ?? ""}`}>
                  <span>{group.label}</span>
                  <Caret className="ml-[6px] w-[12px] h-[8px]" />
                </div>
              </div>
            ))}
          </div>
        </div>
      </div>

      {/* canvas */}
      <div className="relative flex-1 overflow-hidden">
        <Viewport />

        <div className="absolute left-[8px] top-[15px] w-[599px]">
          <div className="h-[48px] bg-[#f1f1f1] border-2 border-[#d0d0d0] flex items-center pl-[10px] pr-[21px] text-[#555]">
            <svg viewBox="0 0 20 12" className="w-[20px] h-[12px]">
              <path d="M10 0V12L0 6ZM20 0V12L10 6Z" fill="#333" />
            </svg>
            <span className="ml-[19px] pb-[3px] text-[21px]">BROWSER</span>
            <div className="ml-auto w-[18px] h-[18px] rounded-full bg-[#222] flex items-center justify-center">
              <div className="w-[12px] h-[3px] bg-[#eee]" />
            </div>
          </div>

          <div className="mt-[11px] flex flex-col gap-[8px] tracking-[0.3px]">
            <div className="flex items-center h-[40px] pl-[37px]">
              <svg viewBox="0 0 14 14" className="w-[14px] h-[14px]">
                <path d="M13 1V13H1Z" fill="#111" stroke="#111" />
                <path d="M10 5V11H4Z" fill="#ddd" />
              </svg>
              <div className="ml-[21px] w-[312px] h-[40px] bg-[#f1f1f1] flex items-center pl-[6px]">
                <Eye />
                <div className="ml-[12px] w-[212px] h-[32px] bg-[#999999] flex items-center pl-[10px]">
                  <Icon className="w-[25px] h-[26px]" vb="0 0 25 26">
                    <path d="M1 6L7 1H24V20L19 25H1Z" fill="#d4d8e0" stroke="#333" strokeWidth="1" />
                    <path d="M19 6L24 1V20L19 25Z" fill="#8d929c" />
                  </Icon>
                  <span className="ml-[32px] pb-[2px] font-bold text-white">Untitled 98</span>
                </div>
                <div className="ml-[9px] w-[26px] h-[26px] rounded-full border-2 border-[#666] bg-[#e4e6ee] flex items-center justify-center">
                  <div className="w-[10px] h-[10px] rounded-full bg-[#444]" />
                </div>
              </div>
            </div>

            {treeRows.map((row) => (
              <div key={row.name} className="flex items-center h-[40px] pl-[74px]">
                <Arrow />
                <div className={`${row.rowClass} ml-[22px] h-[40px] bg-[#f1f1f1] flex items-center pl-[6px]`}>
                  {row.eye && <div className="mr-[18px]">{row.eye}</div>}
                  {row.icon}
                  <span className={`${row.textClass} pb-[2px]`}>{row.name}</span>
                </div>
              </div>
            ))}
          </div>
        </div>

        <div className="absolute left-[8px] top-[1414px] w-[598px] h-[49px] bg-[#f1f1f1] border-b-2 border-r-2 border-[#cfcfcf] flex items-center pl-[50px] pr-[20px] text-[#555]">
          <span>COMMENTS</span>
          <div className="ml-auto w-[18px] h-[18px] rounded-full bg-[#222] relative">
            <div className="absolute left-[3px] top-[8px] w-[12px] h-[2px] bg-[#eee]" />
            <div className="absolute left-[8px] top-[3px] w-[2px] h-[12px] bg-[#eee]" />
          </div>
        </div>

        <NavBar />
      </div>

      {/* timeline */}
      <div className="h-[100px] shrink-0 bg-[#f0f0f0] relative">
        <div className="h-[2px] bg-[#cccccc]" />
        <div className="h-[4px] flex">
          <div className="w-[270px] bg-[#cccccc]" />
          <div className="flex-1 bg-[#dedede]" />
          <div className="w-[90px] bg-[#bbbbbb]" />
        </div>
        <div className="flex">
          <div className="w-[284px] shrink-0 h-[62px] mt-[30px] flex items-center">
            <svg viewBox="0 0 22 24" className="w-[22px] h-[24px] ml-[22px]">
              <path d="M0 0H4V24H0ZM22 0V24L6 12Z" fill="#666" />
            </svg>
            <svg viewBox="0 0 26 24" className="w-[26px] h-[24px] ml-[26px]">
              <path d="M14 0V24L0 12ZM18 6H26V18H18Z" fill="#666" />
            </svg>
            <svg viewBox="0 0 25 32" className="w-[25px] h-[32px] ml-[25px]">
              <path d="M0 0L25 16L0 32Z" fill="#666" />
            </svg>
            <svg viewBox="0 0 26 24" className="w-[26px] h-[24px] ml-[24px]">
              <path d="M12 0V24L26 12ZM0 6H8V18H0Z" fill="#666" />
            </svg>
            <svg viewBox="0 0 22 24" className="w-[22px] h-[24px] ml-[26px]">
              <path d="M18 0H22V24H18ZM0 0V24L16 12Z" fill="#666" />
            </svg>
          </div>
          <div className="pt-[30px]">
            <div className="flex">
              {history.map((h, i) => (
                <div key={i} className="w-[48px] flex flex-col items-center">
                  {h === "s" && <SketchEdit />}
                  {h === "e" && <MiniExtrude />}
                  {h === "m" && <MiniMove />}
                  {h === "l" && <MiniLoft />}
                  <div className="mt-[6px] w-[4px] h-[10px] bg-[#c9c9c9]" />
                </div>
              ))}
            </div>
            <div className="ml-[24px] w-[1826px] h-[4px] bg-[#c9c9c9]" />
          </div>
        </div>
        <svg viewBox="0 0 24 64" className="absolute left-[2144px] top-[24px] w-[24px] h-[64px]">
          <path d="M0 0H24V16L14 28V64H10V28L0 16Z" fill="#666" />
        </svg>
        <Gear className="absolute left-[2822px] top-[38px] w-[30px] h-[30px]" color="#777" />
      </div>
    </div>
  );
}
